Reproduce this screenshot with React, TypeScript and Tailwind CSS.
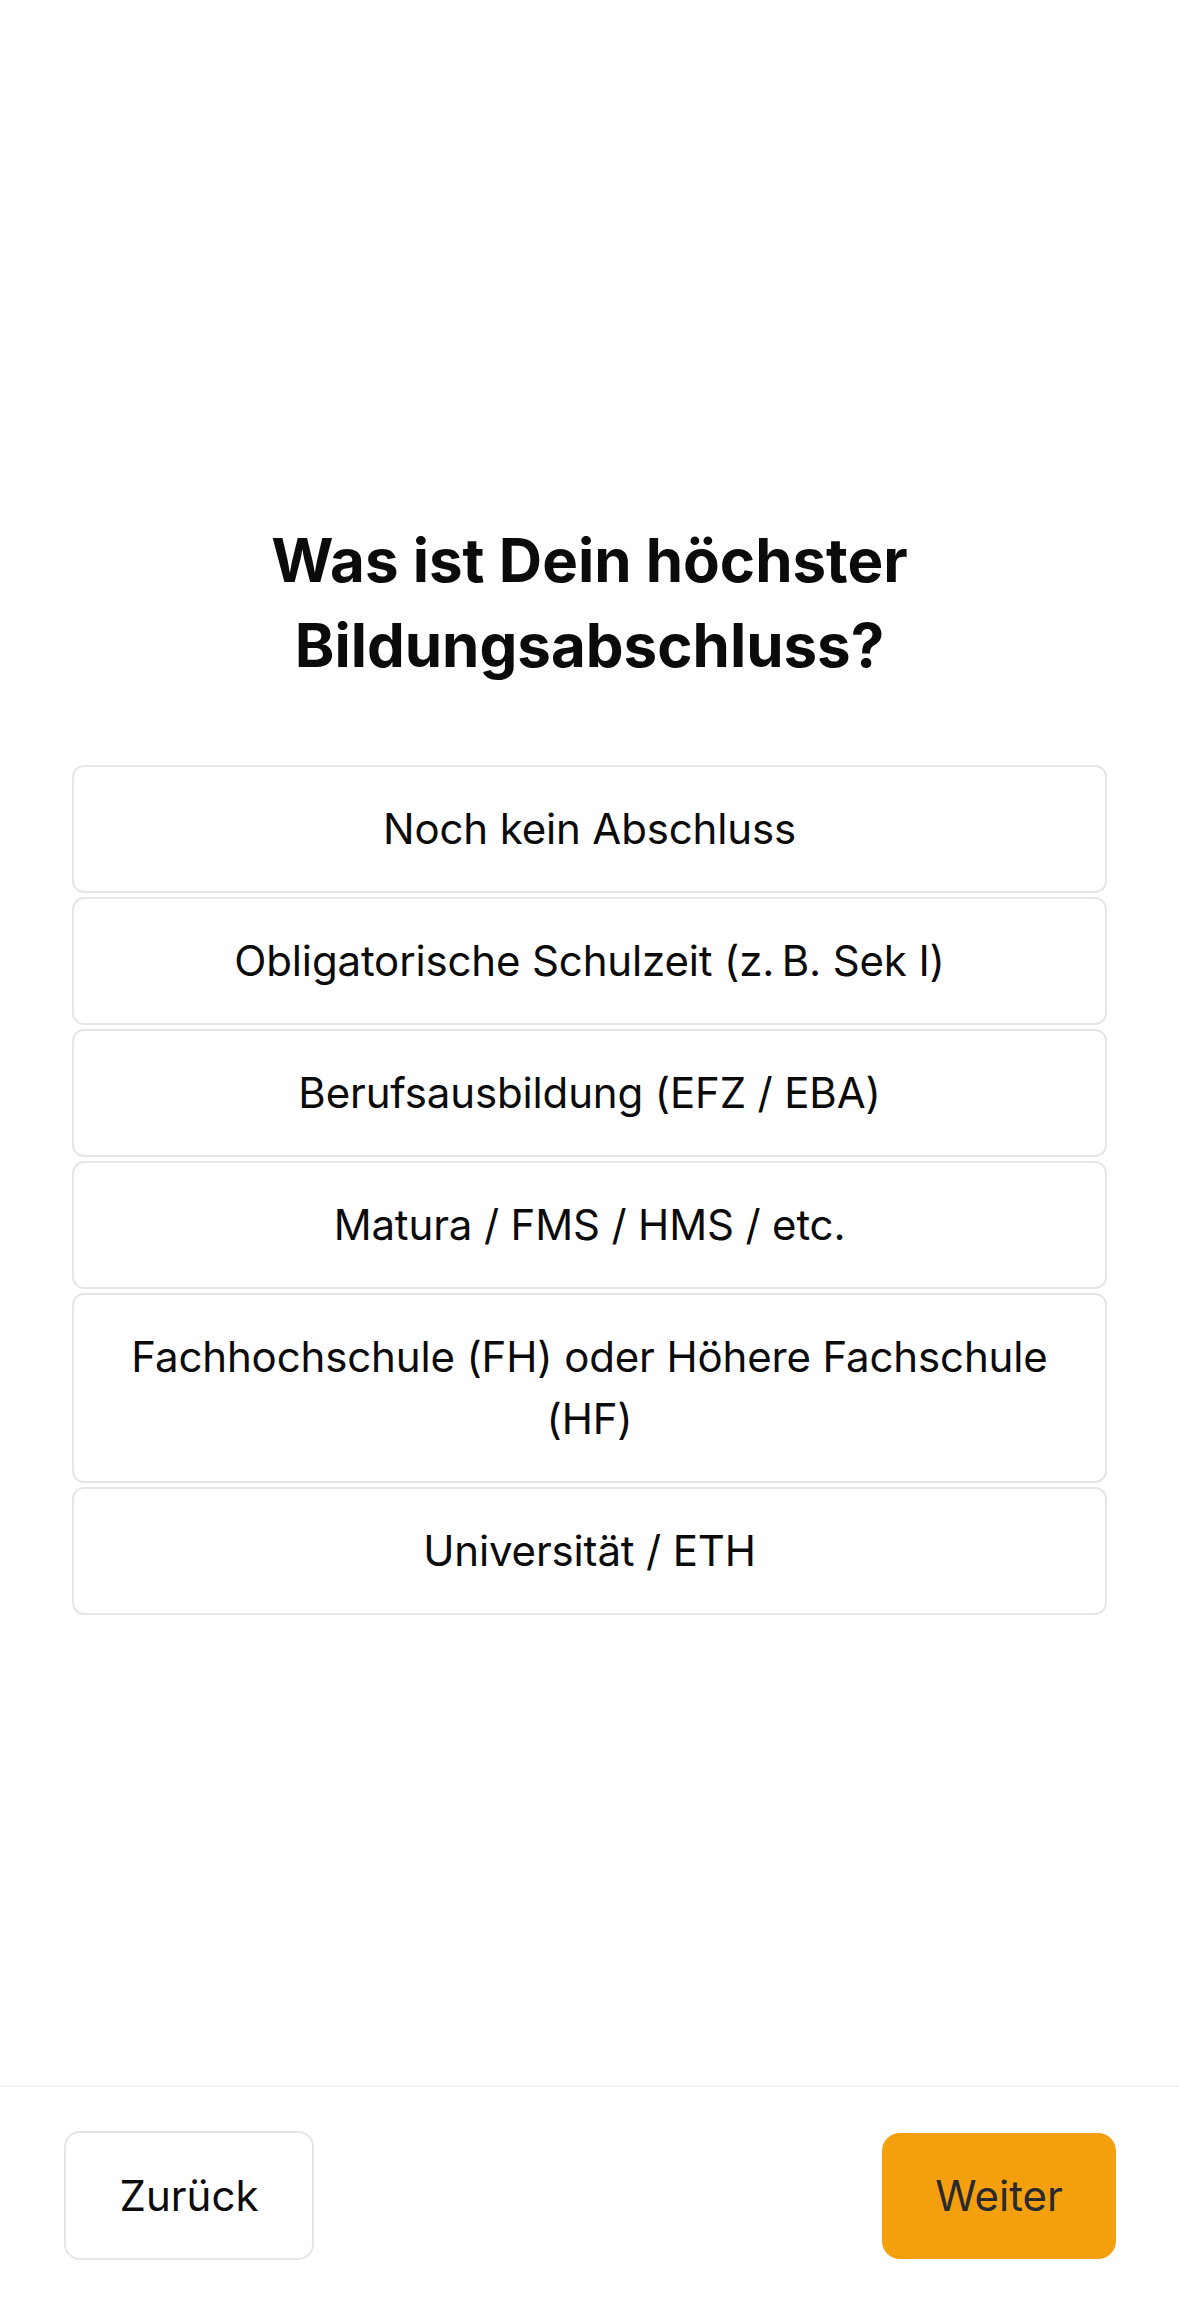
import React from "react";

const options = [
  "Noch kein Abschluss",
  "Obligatorische Schulzeit (z.\u202FB. Sek I)",
  "Berufsausbildung (EFZ / EBA)",
  "Matura / FMS / HMS / etc.",
  "Fachhochschule (FH) oder Höhere Fachschule (HF)",
  "Universität / ETH",
];

export default function App() {
  return (
    <div
      className="flex min-h-[2306px] w-full flex-col bg-white text-[#0b0b0c]"
      style={{ fontFamily: "Inter, 'Noto Sans', 'Liberation Sans', sans-serif" }}
    >
      <main className="flex flex-1 flex-col items-center pt-[518px]">
        <h1 className="w-[800px] text-center text-[60px] font-bold leading-[85px]">
          Was ist Dein höchster Bildungsabschluss?
        </h1>
        <div className="mt-[77px] flex w-[1035px] flex-col gap-[4px]">
          {options.map((o) => (
            <button
              key={o}
              className="rounded-[12px] border-2 border-[#e5e5ea] bg-white px-[40px] py-[31px] text-center text-[42px] leading-[62px] tracking-[-0.15px] text-[#0b0b0c]"
            >
              {o}
            </button>
          ))}
        </div>
      </main>
      <footer className="flex items-center justify-between border-t-2 border-[#f2f2f4] pb-[46px] pl-[64px] pr-[63px] pt-[44px]">
        <button className="h-[129px] w-[250px] rounded-[16px] border-2 border-[#e5e5e8] bg-white text-[42px] text-[#0b0b0c]">
          Zurück
        </button>
        <button className="h-[126px] w-[234px] rounded-[18px] bg-[#f39f0e] text-[42px] text-[#2a2a2e]">
          Weiter
        </button>
      </footer>
    </div>
  );
}
